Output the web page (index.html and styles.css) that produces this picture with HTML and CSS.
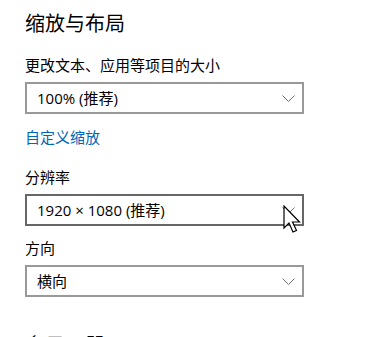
FILE: index.html
```html
<!DOCTYPE html>
<html lang="zh-CN">
<head>
<meta charset="utf-8">
<link rel="stylesheet" href="styles.css">
</head>
<body>
<main class="page">
  <h1 class="title">缩放与布局</h1>
  <div class="label first">更改文本、应用等项目的大小</div>
  <div class="select">
    <span class="value">100% (推荐)</span>
    <svg class="chev" width="13" height="7" viewBox="0 0 13 7"><path d="M0.5 0.5 L6.5 6.5 L12.5 0.5" fill="none" stroke="#707070" stroke-width="1"/></svg>
  </div>
  <a class="link">自定义缩放</a>
  <div class="label">分辨率</div>
  <div class="select hover">
    <span class="value">1920 × 1080 (推荐)</span>
    <svg class="chev" width="13" height="7" viewBox="0 0 13 7"><path d="M0.5 0.5 L6.5 6.5 L12.5 0.5" fill="none" stroke="#707070" stroke-width="1"/></svg>
    <svg class="cursor" width="20" height="30" viewBox="0 0 20 30"><path d="M1 1 L1 23 L6 18 L10 27 L13.5 25.5 L9.5 17 L16.5 17 Z" fill="#fff" stroke="#000" stroke-width="1.2" stroke-linejoin="miter"/></svg>
  </div>
  <div class="label tight">方向</div>
  <div class="select">
    <span class="value">横向</span>
    <svg class="chev" width="13" height="7" viewBox="0 0 13 7"><path d="M0.5 0.5 L6.5 6.5 L12.5 0.5" fill="none" stroke="#707070" stroke-width="1"/></svg>
  </div>
  <h2 class="title next">多显示器</h2>
</main>
</body>
</html>
```

FILE: styles.css
```css
html, body {
  margin: 0;
  padding: 0;
  background: #fff;
  overflow: hidden;
}
.page {
  padding: 9px 0 0 25px;
  font-family: "Open Sans", "Noto Sans CJK SC", sans-serif;
  color: #000;
  display: flex;
  flex-direction: column;
  align-items: flex-start;
}
.title {
  margin: 0;
  font-family: "Noto Sans CJK SC", sans-serif;
  font-weight: 400;
  font-size: 20px;
  line-height: 28px;
}
.label {
  font-size: 15px;
  line-height: 20px;
  margin-top: 20px;
}
.label.first {
  margin-top: 18px;
}
.label.tight {
  margin-top: 12px;
}
.select {
  position: relative;
  box-sizing: border-box;
  width: 279px;
  height: 32px;
  margin-top: 7px;
  border: 2px solid #999;
  display: flex;
  align-items: center;
  justify-content: space-between;
  padding: 0 7px 0 10px;
}
.select.hover {
  border-color: #666;
}
.value {
  font-size: 15px;
  line-height: 20px;
  white-space: nowrap;
}
.chev {
  display: block;
}
.cursor {
  position: absolute;
  left: 256px;
  top: 9px;
}
.link {
  font-size: 15px;
  line-height: 20px;
  color: #0067b8;
  margin-top: 13px;
  cursor: pointer;
}
.title.next {
  margin-top: 34px;
}
```
